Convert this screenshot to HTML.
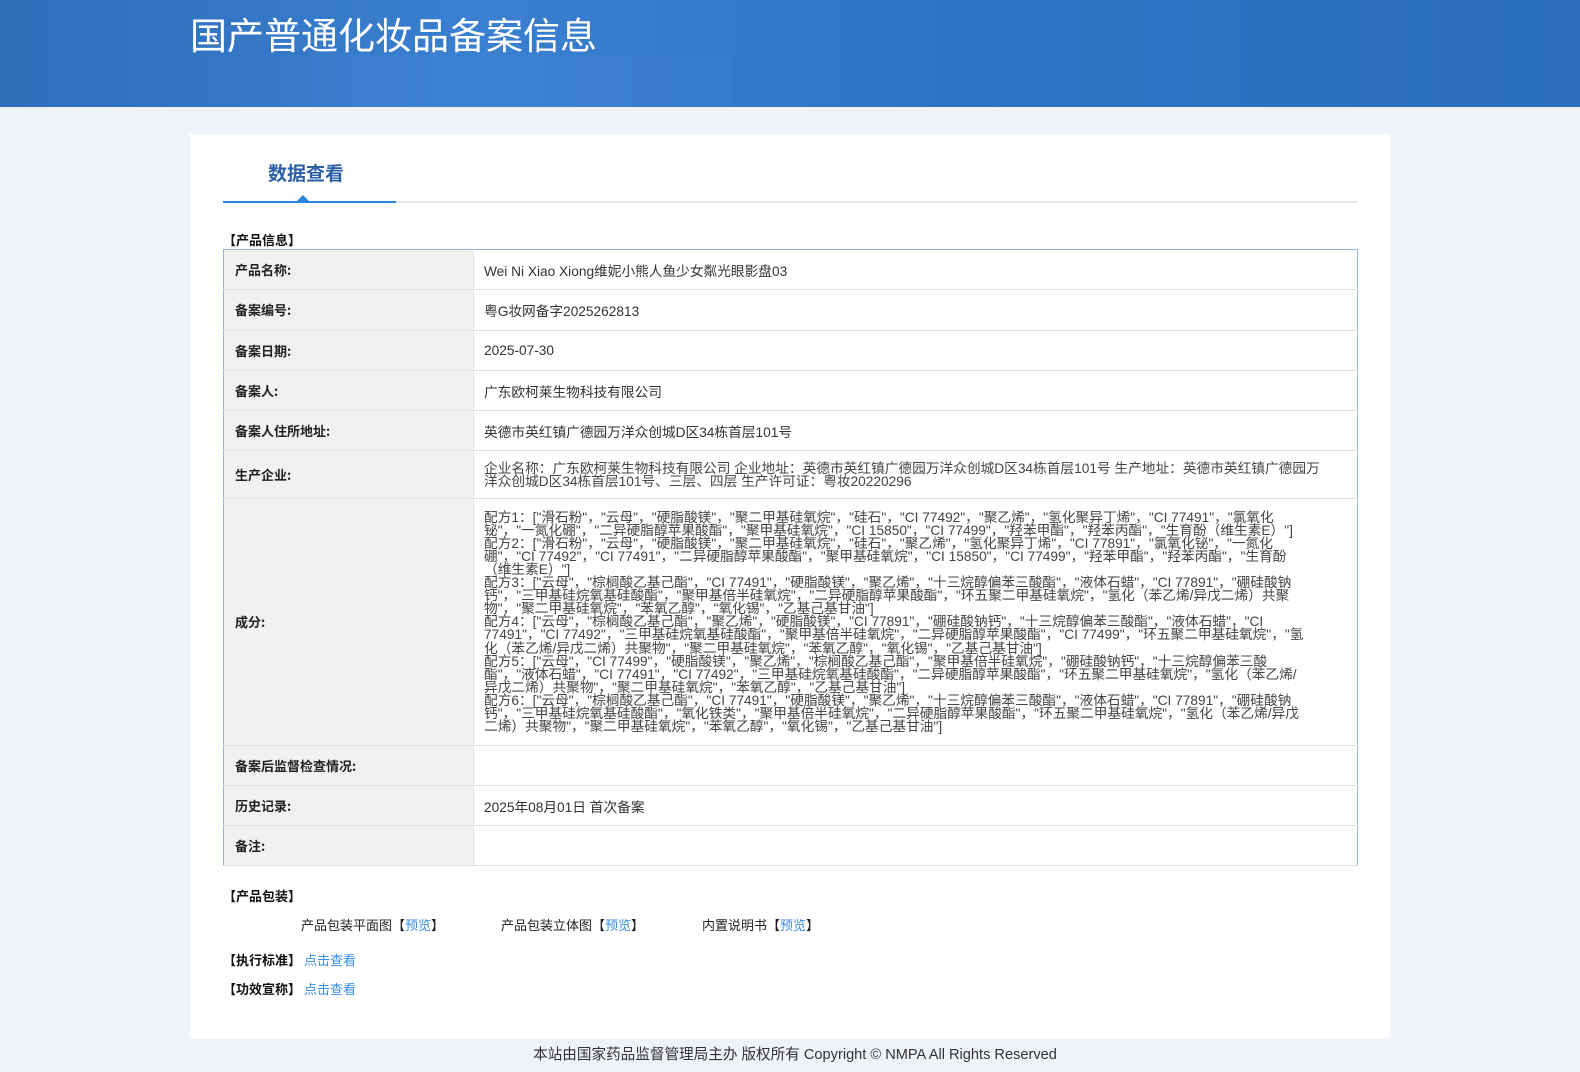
<!DOCTYPE html>
<html><head><meta charset="utf-8"><style>
*{margin:0;padding:0;box-sizing:border-box}
body{width:1580px;height:1072px;background:#eff2f6;font-family:"Liberation Sans","Noto Sans CJK SC",sans-serif;color:#333;position:relative;overflow:hidden}
.hd{position:absolute;left:0;top:0;width:1580px;height:107px;background:linear-gradient(90deg,#2d6fb9 0%,#3a7fd0 30%,#2f74c4 60%,#2a6dbd 100%)}
.hd .b{position:absolute;left:312px;top:55px;width:420px;height:52px;background:rgba(80,140,225,.18)}
.hd h1{position:absolute;left:190px;top:6px;font-size:37px;font-weight:normal;color:#fff;font-family:"Noto Sans CJK SC",sans-serif}
.card{position:absolute;left:190px;top:134px;width:1200px;height:904px;background:#fff}
.tab{position:absolute;left:268px;top:159px;font-size:19px;font-weight:bold;color:#2a5fa5;font-family:"Noto Sans CJK SC",sans-serif}
.line{position:absolute;left:223px;top:201px;width:1135px;height:2px;background:#e4e6e9}
.line2{position:absolute;left:223px;top:201px;width:173px;height:2px;background:#2a86d8}
.tri{position:absolute;left:297px;top:195px;width:0;height:0;border-left:6px solid transparent;border-right:6px solid transparent;border-bottom:6px solid #2a86d8}
.sec{position:absolute;left:223px;font-size:13px;font-weight:bold;color:#111;font-family:"Noto Sans CJK SC",sans-serif}
table{position:absolute;left:223px;top:249px;width:1135px;border-collapse:collapse;border:1px solid #8fb4e6;font-size:13.7px;font-family:"Liberation Sans","Noto Sans CJK SC",sans-serif}
td{border-bottom:1px solid #e2e2e2;vertical-align:middle}
td.l{width:250px;background:#f1f1f1;font-weight:bold;padding-left:11px;color:#222;border-right:1px solid #e2e2e2;font-family:"Noto Sans CJK SC",sans-serif;font-size:13px}
td.v{padding-left:10px;color:#333}
.sm{font-size:13.7px;line-height:13.1px;white-space:nowrap;color:#444}
.pk{position:absolute;top:915px;font-size:13px;color:#222;font-family:"Noto Sans CJK SC",sans-serif}
a{color:#3a8ee6;text-decoration:none}
.ft{position:absolute;top:1043px;left:0;width:1580px;text-align:center;font-size:14.6px;color:#333;padding-left:10px}
</style></head><body>
<div class="hd"><div class="b"></div><h1>国产普通化妆品备案信息</h1></div>
<div class="card"></div>
<div class="tab">数据查看</div>
<div class="line"></div><div class="line2"></div><div class="tri"></div>
<div class="sec" style="top:230px">【产品信息】</div>
<table>
<tr style="height:40.3px"><td class="l">产品名称:</td><td class="v">Wei Ni Xiao Xiong维妮小熊人鱼少女粼光眼影盘03</td></tr>
<tr style="height:40.3px"><td class="l">备案编号:</td><td class="v">粤G妆网备字2025262813</td></tr>
<tr style="height:40.3px"><td class="l">备案日期:</td><td class="v">2025-07-30</td></tr>
<tr style="height:40.3px"><td class="l">备案人:</td><td class="v">广东欧柯莱生物科技有限公司</td></tr>
<tr style="height:40.3px"><td class="l">备案人住所地址:</td><td class="v">英德市英红镇广德园万洋众创城D区34栋首层101号</td></tr>
<tr style="height:47.4px"><td class="l">生产企业:</td><td class="v"><div class="sm">企业名称：广东欧柯莱生物科技有限公司 企业地址：英德市英红镇广德园万洋众创城D区34栋首层101号 生产地址：英德市英红镇广德园万<br>洋众创城D区34栋首层101号、三层、四层 生产许可证：粤妆20220296</div></td></tr>
<tr style="height:247px"><td class="l">成分:</td><td class="v"><div class="sm">配方1：["滑石粉"，"云母"，"硬脂酸镁"，"聚二甲基硅氧烷"，"硅石"，"CI 77492"，"聚乙烯"，"氢化聚异丁烯"，"CI 77491"，"氯氧化<br>铋"，"一氮化硼"，"二异硬脂醇苹果酸酯"，"聚甲基硅氧烷"，"CI 15850"，"CI 77499"，"羟苯甲酯"，"羟苯丙酯"，"生育酚（维生素E）"]<br>配方2：["滑石粉"，"云母"，"硬脂酸镁"，"聚二甲基硅氧烷"，"硅石"，"聚乙烯"，"氢化聚异丁烯"，"CI 77891"，"氯氧化铋"，"一氮化<br>硼"，"CI 77492"，"CI 77491"，"二异硬脂醇苹果酸酯"，"聚甲基硅氧烷"，"CI 15850"，"CI 77499"，"羟苯甲酯"，"羟苯丙酯"，"生育酚<br>（维生素E）"]<br>配方3：["云母"，"棕榈酸乙基己酯"，"CI 77491"，"硬脂酸镁"，"聚乙烯"，"十三烷醇偏苯三酸酯"，"液体石蜡"，"CI 77891"，"硼硅酸钠<br>钙"，"三甲基硅烷氧基硅酸酯"，"聚甲基倍半硅氧烷"，"二异硬脂醇苹果酸酯"，"环五聚二甲基硅氧烷"，"氢化（苯乙烯/异戊二烯）共聚<br>物"，"聚二甲基硅氧烷"，"苯氧乙醇"，"氧化锡"，"乙基己基甘油"]<br>配方4：["云母"，"棕榈酸乙基己酯"，"聚乙烯"，"硬脂酸镁"，"CI 77891"，"硼硅酸钠钙"，"十三烷醇偏苯三酸酯"，"液体石蜡"，"CI<br>77491"，"CI 77492"，"三甲基硅烷氧基硅酸酯"，"聚甲基倍半硅氧烷"，"二异硬脂醇苹果酸酯"，"CI 77499"，"环五聚二甲基硅氧烷"，"氢<br>化（苯乙烯/异戊二烯）共聚物"，"聚二甲基硅氧烷"，"苯氧乙醇"，"氧化锡"，"乙基己基甘油"]<br>配方5：["云母"，"CI 77499"，"硬脂酸镁"，"聚乙烯"，"棕榈酸乙基己酯"，"聚甲基倍半硅氧烷"，"硼硅酸钠钙"，"十三烷醇偏苯三酸<br>酯"，"液体石蜡"，"CI 77491"，"CI 77492"，"三甲基硅烷氧基硅酸酯"，"二异硬脂醇苹果酸酯"，"环五聚二甲基硅氧烷"，"氢化（苯乙烯/<br>异戊二烯）共聚物"，"聚二甲基硅氧烷"，"苯氧乙醇"，"乙基己基甘油"]<br>配方6：["云母"，"棕榈酸乙基己酯"，"CI 77491"，"硬脂酸镁"，"聚乙烯"，"十三烷醇偏苯三酸酯"，"液体石蜡"，"CI 77891"，"硼硅酸钠<br>钙"，"三甲基硅烷氧基硅酸酯"，"氧化铁类"，"聚甲基倍半硅氧烷"，"二异硬脂醇苹果酸酯"，"环五聚二甲基硅氧烷"，"氢化（苯乙烯/异戊<br>二烯）共聚物"，"聚二甲基硅氧烷"，"苯氧乙醇"，"氧化锡"，"乙基己基甘油"]</div></td></tr>
<tr style="height:40.3px"><td class="l">备案后监督检查情况:</td><td class="v"></td></tr>
<tr style="height:40.3px"><td class="l">历史记录:</td><td class="v">2025年08月01日 首次备案</td></tr>
<tr style="height:39.3px"><td class="l">备注:</td><td class="v"></td></tr>
</table>
<div class="sec" style="top:886px">【产品包装】</div>
<div class="pk" style="left:301px">产品包装平面图【<a>预览</a>】</div>
<div class="pk" style="left:501px">产品包装立体图【<a>预览</a>】</div>
<div class="pk" style="left:702px">内置说明书【<a>预览</a>】</div>
<div class="sec" style="top:950px">【执行标准】 <a style="font-weight:normal">点击查看</a></div>
<div class="sec" style="top:979px">【功效宣称】 <a style="font-weight:normal">点击查看</a></div>
<div class="ft">本站由国家药品监督管理局主办 版权所有 Copyright © NMPA All Rights Reserved</div>
</body></html>
